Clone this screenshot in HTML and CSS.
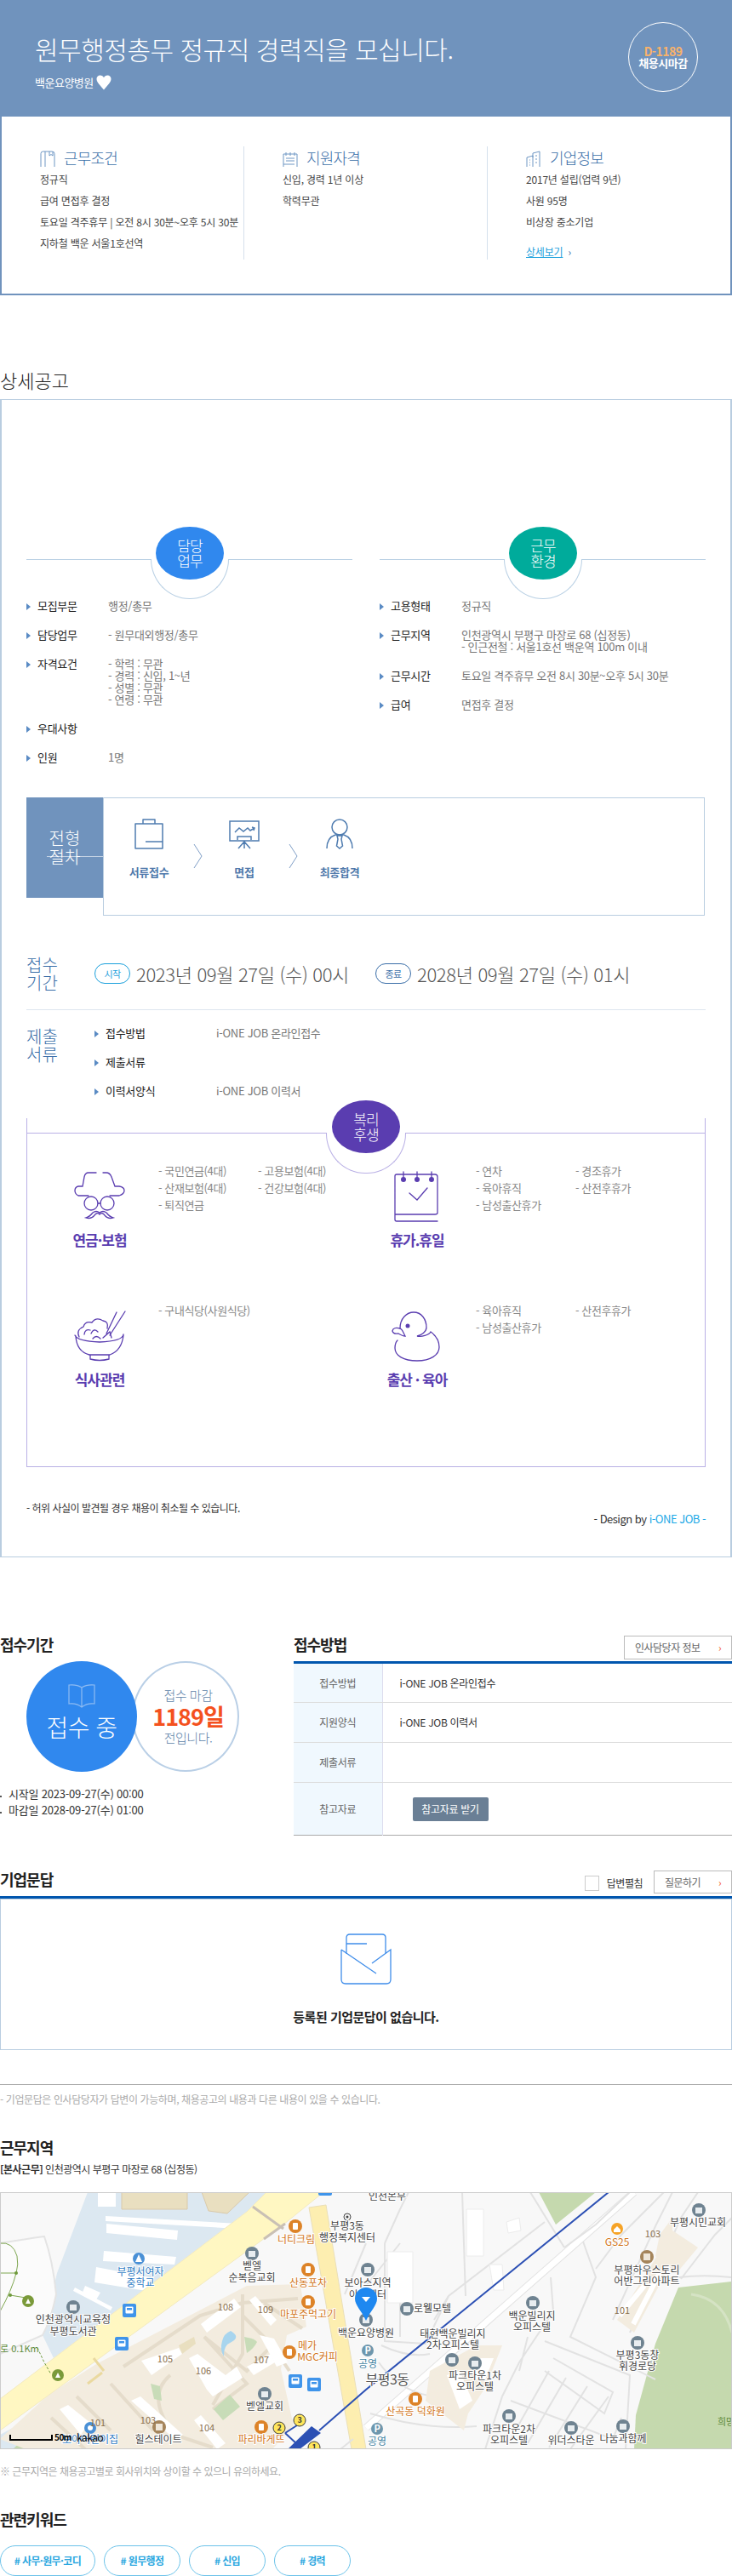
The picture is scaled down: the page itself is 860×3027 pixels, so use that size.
FILE: index.html
```html
<!DOCTYPE html>
<html lang="ko">
<head>
    <meta charset="UTF-8">
    <title>원무행정총무 정규직 경력직을 모십니다.</title>
    <link rel="stylesheet" href="styles.css">
</head>
<body>
    <!-- top summary -->
    <div class="job-head">
        <div class="job-title">
            <h1>원무행정총무 정규직 경력직을 모십니다.</h1>
            <div class="job-company">백운요양병원
                <svg class="heart" viewBox="0 0 18 18"><path d="M9 17.5C5 12.5 0.5 9 0.5 4.8 0.5 2.2 2.4 0.5 4.6 0.5 6.6 0.5 8.2 1.5 9 3.2 9.8 1.5 11.4 0.5 13.4 0.5 15.6 0.5 17.5 2.2 17.5 4.8 17.5 9 13 12.5 9 17.5Z" fill="#fff"/></svg>
            </div>
        </div>
        <div class="d-day">
            <span class="d-num">D-1189</span>
            <span class="d-txt">채용시마감</span>
        </div>
    </div>
    <div class="summary">
        <div class="sum-col first">
            <h3><svg viewBox="0 0 18 20"><path d="M1 19V3.5Q1 1 3.5 1H14Q17 1 17 3.500V19M6 19V1M11 1V6L13 4.500 15 6V1" fill="none" stroke="#6f97c4"/></svg>근무조건</h3>
            <p>정규직</p>
            <p>급여 면접후 결정</p>
            <p>토요일 격주휴무 | 오전 8시 30분~오후 5시 30분</p>
            <p>지하철 백운 서울1호선역</p>
        </div>
        <div class="sum-col">
            <h3><svg viewBox="0 0 18 20"><path d="M1 19V4H17V19M4 2V6M9 2V6M14 2V6M4 9H14M4 12H14M1 16H14" fill="none" stroke="#6f97c4"/></svg>지원자격</h3>
            <p>신입, 경력 1년 이상</p>
            <p>학력무관</p>
        </div>
        <div class="sum-col">
            <h3><svg viewBox="0 0 18 20"><path d="M1 19V8L8 6V19M8 8V3L16 1V19M4 11H5M4 14H5M4 17H5M11 6H13M11 10H13M11 14H13" fill="none" stroke="#6f97c4"/></svg>기업정보</h3>
            <p>2017년 설립(업력 9년)</p>
            <p>사원 95명</p>
            <p>비상장 중소기업</p>
            <a class="more" href="#"><u>상세보기</u><i>›</i></a>
        </div>
    </div>

    <h2 class="detail-title">상세공고</h2>

    <div class="detail">
        <div class="two-col">
            <div class="col">
                <div class="badge-head">
                    <span class="arc"></span>
                    <span class="oval blue">담당<br>업무</span>
                </div>
                <div class="row"><b>모집부문</b><span>행정/총무</span></div>
                <div class="row"><b>담당업무</b><span>- 원무대외행정/총무</span></div>
                <div class="row"><b>자격요건</b><span>- 학력 : 무관<br>- 경력 : 신입, 1~년<br>- 성별 : 무관<br>- 연령 : 무관</span></div>
                <div class="row"><b>우대사항</b><span></span></div>
                <div class="row"><b>인원</b><span>1명</span></div>
            </div>
            <div class="col">
                <div class="badge-head">
                    <span class="arc"></span>
                    <span class="oval green">근무<br>환경</span>
                </div>
                <div class="row"><b>고용형태</b><span>정규직</span></div>
                <div class="row"><b>근무지역</b><span>인천광역시 부평구 마장로 68 (십정동)<br>- 인근전철 : 서울1호선 백운역 100m 이내</span></div>
                <div class="row"><b>근무시간</b><span>토요일 격주휴무 오전 8시 30분~오후 5시 30분</span></div>
                <div class="row"><b>급여</b><span>면접후 결정</span></div>
            </div>
        </div>

        <div class="proc">
            <div class="proc-name">전형<br>절차</div>
            <div class="proc-box">
                <div class="step">
                    <svg viewBox="0 0 36 36"><path d="M2 6H34V35H2ZM11 6V1H25V6M14 27H34" fill="none" stroke="#4f7cb0" stroke-width="1.500" stroke-linejoin="round"/></svg>
                    <b>서류접수</b>
                </div>
                <svg class="chev" viewBox="0 0 11 28"><path d="M1 0L10 14 1 28" fill="none" stroke="#7f9ec6"/></svg>
                <div class="step">
                    <svg viewBox="0 0 36 36"><path d="M1 3H35V26H1ZM10 25V21H26V25M18 26V35M18 27L11 35M18 27L25 35M7 16L12 11 17 15 22 11 25 14 30 11M27 10L30 11 29 14" fill="none" stroke="#4f7cb0" stroke-width="1.500"/></svg>
                    <b>면접</b>
                </div>
                <svg class="chev" viewBox="0 0 11 28"><path d="M1 0L10 14 1 28" fill="none" stroke="#7f9ec6"/></svg>
                <div class="step">
                    <svg viewBox="0 0 36 36"><circle cx="18" cy="10" r="9" fill="none" stroke="#4f7cb0" stroke-width="1.500"/><path d="M3 35C3 26 7 21 13 19H23C29 21 33 26 33 35M15 20H21L20 24 21.500 32 18 35 14.500 32 16 24Z" fill="none" stroke="#4f7cb0" stroke-width="1.500"/></svg>
                    <b>최종합격</b>
                </div>
            </div>
        </div>

        <div class="period">
            <div class="side-title">접수<br>기간</div>
            <span class="pill start">시작</span><span class="date">2023년 09월 27일 (수) 00시</span>
            <span class="pill end">종료</span><span class="date">2028년 09월 27일 (수) 01시</span>
        </div>

        <div class="docs">
            <div class="side-title">제출<br>서류</div>
            <div class="doc-rows">
                <div class="row"><b>접수방법</b><span>i-ONE JOB 온라인접수</span></div>
                <div class="row"><b>제출서류</b><span></span></div>
                <div class="row"><b>이력서양식</b><span>i-ONE JOB 이력서</span></div>
            </div>
        </div>

        <div class="welfare">
            <span class="arc"></span>
            <span class="oval purple">복리<br>후생</span>
            <div class="wf-grid">
                <div class="wf-cell">
                    <div class="wf-icon">
                        <svg viewBox="0 0 60 58"><g fill="none" stroke="#5a3db0" stroke-width="1.300" stroke-linecap="round"><path d="M26 1H17Q13 1 12 6L10 17H5Q1 18 1 22T5 28H17M34 1H38Q42 1 44 6L48 17H53Q59 18 59 22T53 28H42"/><circle cx="20" cy="37" r="8"/><circle cx="39" cy="37" r="8"/><path d="M28 37H31"/><path d="M14 54Q20 56 24 51 27 47 30 50 33 47 36 51 40 56 46 54 42 53 38 48 34 45 30 48 26 45 22 48 18 53 14 54Z"/></g></svg>
                        <strong>연금·보험</strong>
                    </div>
                    <ul><li>- 국민연금(4대)</li><li>- 고용보험(4대)</li><li>- 산재보험(4대)</li><li>- 건강보험(4대)</li><li>- 퇴직연금</li></ul>
                </div>
                <div class="wf-cell">
                    <div class="wf-icon">
                        <svg viewBox="0 0 60 58"><g fill="none" stroke="#5a3db0" stroke-width="1.300" stroke-linecap="round"><path d="M6 3H51Q54 3 54 6V48Q54 50 51 50H4V5Q4 3 6 3ZM4 50V56Q4 58 6 58H54M21 25L30 33 42 19M14 0V10M30 0V10M47 0V10"/></g><circle cx="14" cy="9" r="3" fill="#5a3db0"/><circle cx="30" cy="9" r="3" fill="#5a3db0"/><circle cx="47" cy="9" r="3" fill="#5a3db0"/></svg>
                        <strong>휴가.휴일</strong>
                    </div>
                    <ul><li>- 연차</li><li>- 경조휴가</li><li>- 육아휴직</li><li>- 산전후휴가</li><li>- 남성출산휴가</li></ul>
                </div>
                <div class="wf-cell">
                    <div class="wf-icon">
                        <svg viewBox="0 0 60 58"><g fill="none" stroke="#5a3db0" stroke-width="1.300" stroke-linecap="round"><path d="M1 28Q4 35 30 36 57 35 58 27M2 29Q3 47 18 51H42Q56 46 58 28M19 51V56Q30 59 41 56V51M6 30Q2 22 11 18 13 11 21 13 26 6 34 11 41 12 39 20M12 27Q13 20 19 22M20 26Q23 19 28 24M22 32Q26 27 31 32M38 26L50 1M42 28L60 0M34 31L42 24 44 31"/></g></svg>
                        <strong>식사관련</strong>
                    </div>
                    <ul><li>- 구내식당(사원식당)</li></ul>
                </div>
                <div class="wf-cell">
                    <div class="wf-icon">
                        <svg viewBox="0 0 60 58"><g fill="none" stroke="#5a3db0" stroke-width="1.300" stroke-linecap="round"><path d="M10 20C10 8 18 1 26 1 35 1 41 9 41 19 41 24 35 28 30 29 35 30 44 28 46 24 53 29 56 34 56 42 56 51 46 58 30 58 14 58 4 52 4 43 4 38 6 35 7 34"/><path d="M10 20Q2 18 1 23 2 27 8 26 13 29 16 29 14 25 13 23 12 21 10 20Z"/></g><circle cx="19" cy="17" r="2.500" fill="#5a3db0"/></svg>
                        <strong>출산 · 육아</strong>
                    </div>
                    <ul><li>- 육아휴직</li><li>- 산전후휴가</li><li>- 남성출산휴가</li></ul>
                </div>
            </div>
        </div>

        <p class="warn">- 허위 사실이 발견될 경우 채용이 취소될 수 있습니다.</p>
        <p class="design">- Design by <em>i-ONE JOB -</em></p>
    </div>

    <!-- period + method -->
    <div class="apply">
        <div class="apply-left">
            <h4>접수기간</h4>
            <div class="circles">
                <div class="c-blue">
                    <svg viewBox="0 0 32 28"><path d="M16 4Q10 0 1 1V23Q10 22 16 27 22 22 31 23V1Q22 0 16 4ZM16 4V27" fill="none" stroke="#8fbcf2" stroke-width="1.200"/></svg>
                    <span>접수 중</span>
                </div>
                <div class="c-white">
                    <span>접수 마감</span>
                    <strong>1189일</strong>
                    <span>전입니다.</span>
                </div>
            </div>
            <ul class="dates">
                <li>시작일 2023-09-27(수) 00:00</li>
                <li>마감일 2028-09-27(수) 01:00</li>
            </ul>
        </div>
        <div class="apply-right">
            <div class="method-head">
                <h4>접수방법</h4>
                <a class="line-btn wide" href="#">인사담당자 정보<i>›</i></a>
            </div>
            <table class="method">
                <tr><th>접수방법</th><td>i-ONE JOB 온라인접수</td></tr>
                <tr><th>지원양식</th><td>i-ONE JOB 이력서</td></tr>
                <tr><th>제출서류</th><td></td></tr>
                <tr class="tall"><th>참고자료</th><td><a class="file-btn" href="#">참고자료 받기</a></td></tr>
            </table>
        </div>
    </div>

    <div class="qa-head">
        <h4>기업문답</h4>
        <label class="qa-check"><span class="box"></span>답변펼침</label>
        <a class="line-btn" href="#">질문하기<i>›</i></a>
    </div>
    <div class="qa-box">
        <svg viewBox="0 0 60 60"><path d="M7 24V5Q7 1 11 1H49Q53 1 53 5V24M7 12H31M1 19V54Q1 59 6 59H54Q59 59 59 54V19L37 35M1 19L42 47" fill="none" stroke="#3f8dea" stroke-width="1.300"/></svg>
        <strong>등록된 기업문답이 없습니다.</strong>
    </div>
    <p class="qa-note">- 기업문답은 인사담당자가 답변이 가능하며, 채용공고의 내용과 다른 내용이 있을 수 있습니다.</p>

    <h4 class="area-title">근무지역</h4>
    <p class="address"><b>[본사근무]</b> 인천광역시 부평구 마장로 68 (십정동)</p>

    <div class="map">
        <svg viewBox="0 0 860 302" width="860" height="302">
            <defs>
                <g id="poi"><circle r="8" fill="#6f8391"/><rect x="-4" y="-3" width="8" height="7" fill="#e8edf0"/></g>
                <g id="poi-brown"><circle r="8" fill="#a5855c"/><rect x="-4" y="-4" width="8" height="8" fill="#efe7da"/></g>
                <g id="poi-orange"><circle r="8" fill="#dd8328"/><rect x="-3" y="-4" width="6" height="8" rx="1" fill="#fff"/></g>
                <g id="bus"><rect x="-8" y="-8" width="16" height="16" rx="2" fill="#3f94ea"/><rect x="-4.500" y="-4.500" width="9" height="8" rx="1" fill="#fff"/><rect x="-3" y="-3" width="6" height="2.500" fill="#3f94ea"/></g>
            </defs>
            <rect width="860" height="302" fill="#f8f8f8"/>

            <!-- water, parks -->
            <path d="M103 0L67 95 50 168 63 195 290 23 313 0Z" fill="#dce8f1"/>
            <path d="M0 285L42 262 80 302H0Z" fill="#dce8f1"/>
            <path d="M15 302L45 275 60 302Z" fill="#c5d9ae"/>
            <path d="M633 0H700L653 38Z" fill="#c5d9ae"/>
            <path d="M860 105L797 112 770 178 747 262 745 302H860Z" fill="#c5d9ae"/>
            <path d="M812 120Q850 125 860 165" fill="none" stroke="#d5e3c4" stroke-width="3"/>

            <!-- apartment block -->
            <path d="M57 238L113 202 290 110 353 108 360 158 337 168 330 208 345 275 320 302H30L0 290Z" fill="#f3ecdf"/>
            <g fill="none" stroke="#e5dccb" stroke-width="4">
                <path d="M145 205L235 145 285 130 350 125"/>
                <path d="M285 120V190L250 250M285 145L320 180 290 210 240 170"/>
                <path d="M130 225L180 280M200 215Q170 240 205 285L250 300"/>
                <path d="M90 240L130 280M60 265L100 302M240 170L290 225 250 255"/>
                <path d="M310 130L355 160M320 180L340 210"/>
            </g>
            <path d="M271 163Q283 170 272 176 262 180 263 193 258 185 261 175 263 166 271 163Z" fill="#a8d5ee"/>
            <path d="M287 170Q300 172 302 176 298 184 290 189Z" fill="#c8dcb8"/>
            <path d="M177 225L188 228 190 245 181 243Z" fill="#c8dcb8"/>
            <path d="M251 255L270 238 282 252 262 268Z" fill="#c8dcb8"/>
            <g fill="#fff">
                <path d="M236 155L275 125 283 135 243 165Z"/>
                <path d="M293 127L300 122 325 150 318 157Z"/>
                <path d="M166 198L210 183 214 190 178 215Z"/>
                <path d="M222 195L232 190 265 215 278 205 285 218 250 240 243 232Z"/>
                <path d="M290 205L318 190 323 200 298 215Z"/>
                <path d="M154 245L165 240 215 285 205 290Z"/>
                <path d="M70 255L80 250 105 270 95 285Z"/>
                <path d="M228 268L236 262 265 295 255 302Z"/>
                <path d="M305 168L322 172 338 200 325 205Z"/>
            </g>
            <path d="M210 180L228 170 230 178 214 190Z" fill="#e9dfc0"/>

            <!-- school buildings -->
            <path d="M143 0H220V20H143Z" fill="#e9dfc0" stroke="#d9c9aa"/>
            <path d="M237 0H293L267 25 245 22Z" fill="#e9dfc0" stroke="#d9c9aa"/>
            <g fill="#fff">
                <rect x="115" y="0" width="21" height="17"/>
                <path d="M124 28L300 38 300 44 124 34Z"/>
                <path d="M125 37L209 45 208 56 125 48Z"/>
                <path d="M122 69L207 76 205 85 121 81Z"/>
                <path d="M113 88L176 100 172 116 111 106Z"/>
                <path d="M100 110L118 118 112 128 96 120Z"/>
                <path d="M88 112L132 135 130 139 86 116Z"/>
            </g>

            <!-- left park outline -->
            <path d="M0 60Q30 55 52 52 62 80 66 120 60 150 50 168L0 190" fill="#fbfbfb" stroke="#e4e4e4" stroke-width="2"/>
            <g fill="none" stroke="#7ea650" stroke-width="1">
                <path d="M0 60Q15 58 20 75 22 85 19 95 14 115 0 140"/>
                <path d="M0 95H19M12 121L30 124"/>
            </g>
            <circle cx="19" cy="95" r="2" fill="#6e9a3a"/><circle cx="12" cy="121" r="2" fill="#6e9a3a"/>

            <!-- main roads -->
            <path d="M0 243L290 23 313 0H380L333 38 0 280Z" fill="#fff7c2" stroke="#f3eac0"/>
            <path d="M363 18L383 15 430 302H413Z" fill="#fdeeb0" stroke="#eadfb8"/>
            <path d="M103 225L120 212M110 195L122 210" stroke="#ead9a0" stroke-width="3"/>
            <g stroke="#c9c0b5" stroke-width="3"><path d="M297 17L333 43M335 37L310 55"/></g>

            <!-- white roads -->
            <g fill="none" stroke="#e3e3e3" stroke-width="9"><path d="M745 0L430 277"/></g>
            <g fill="none" stroke="#fff" stroke-width="7"><path d="M745 0L430 277"/></g>
            <g fill="none" stroke="#e2e2e2" stroke-width="2">
                <path d="M623 0L663 65M640 35L527 122 510 150M663 65L700 38 740 0"/>
                <path d="M547 122L543 0M452 60L470 20 480 0M430 110L470 60"/>
                <path d="M452 60V175L500 178 527 122M470 120V170"/>
                <path d="M448 180Q480 195 505 190M435 260Q500 280 560 275"/>
                <path d="M647 100L650 140 610 200 590 240 570 302M620 170L610 210"/>
                <path d="M685 58L700 100 670 170 770 220M640 175L740 215 735 302"/>
                <path d="M650 195L720 235 710 260 640 210M600 245L720 290 730 265"/>
                <path d="M645 210L600 290M665 218L620 295M690 228L645 300M715 240L670 302"/>
                <path d="M700 90L730 50 780 0M720 150L770 40 790 0M740 165L800 30 820 0"/>
                <path d="M770 105Q810 95 860 100"/>
                <path d="M800 102L840 50 860 30"/>
                <path d="M445 200Q470 235 510 240L560 225M400 302L415 290"/>
                <path d="M430 60L405 120"/>
            </g>
            <g fill="#fff" stroke="#ececec">
                <path d="M455 70H485V130H455Z"/>
                <path d="M548 20H568V75H548Z"/>
                <path d="M595 35L610 30 612 45 597 48Z"/>
                <path d="M575 85L580 115 592 115 590 85Z"/>
            </g>

            <!-- small apartment right -->
            <path d="M775 50L790 30 790 45 820 65 795 95 770 75Z" fill="#f3ecdf"/>
            <path d="M725 150L775 70 790 80 745 165Z" fill="#f3ecdf"/>
            <g stroke="#fff" stroke-width="6"><path d="M728 145L757 110M744 155L775 95"/></g>
            <path d="M505 210L560 180 590 180 570 230 550 260 545 280 500 245Z" fill="#f3ecdf"/>
            <g fill="#fff"><path d="M525 215L540 210 555 245 540 255Z"/><path d="M560 195L580 195 570 220 555 220Z"/></g>

            <!-- subway -->
            <path d="M715 0L430 232 375 280" fill="none" stroke="#2c50b4" stroke-width="2"/>
            <path d="M366 275L377 283 352 302H338Z" fill="#2c50b4"/>
            <path d="M335 283L352 272M335 283L350 297" fill="none" stroke="#2c50b4" stroke-width="2"/>
            <g stroke="#3a3a3a" font-size="9" fill="#ffe65c">
                <circle cx="352" cy="268" r="7"/><circle cx="328" cy="277" r="7"/><circle cx="369" cy="300" r="7"/>
            </g>
            <text class="m-num" x="352" y="271">3</text>
            <text class="m-num" x="328" y="280">2</text>
            <text class="m-num" x="369" y="303">1</text>

            <!-- pois -->
            <use href="#poi" x="86" y="135"/><use href="#poi" x="296" y="72"/><use href="#poi" x="311" y="237"/>
            <use href="#poi" x="432" y="91"/><use href="#poi" x="430" y="150"/><use href="#poi" x="478" y="137"/>
            <use href="#poi" x="626" y="130"/><use href="#poi" x="531" y="197"/><use href="#poi" x="558" y="201"/>
            <use href="#poi" x="598" y="263"/><use href="#poi" x="671" y="277"/><use href="#poi" x="732" y="275"/>
            <use href="#poi" x="749" y="177"/><use href="#poi" x="821" y="21"/>
            <use href="#poi-brown" x="187" y="276"/><use href="#poi-brown" x="760" y="76"/>
            <use href="#poi-orange" x="347" y="40"/><use href="#poi-orange" x="362" y="91"/><use href="#poi-orange" x="362" y="129"/>
            <use href="#poi-orange" x="340" y="188"/><use href="#poi-orange" x="307" y="276"/><use href="#poi-orange" x="488" y="243"/>
            <circle cx="725" cy="43" r="7" fill="#f6a326"/><path d="M721 44L725 40 729 44V47H721Z" fill="#fff"/>
            <circle cx="408" cy="29" r="4" fill="none" stroke="#444"/><circle cx="408" cy="29" r="1.500" fill="#444"/>
            <circle cx="163" cy="78" r="7" fill="#4a90d6"/><path d="M159 82L163 73 167 82Z" fill="#fff"/>
            <circle cx="106" cy="277" r="7" fill="#4a90d6"/><circle cx="106" cy="277" r="3" fill="#fff"/>
            <circle cx="33" cy="128" r="7" fill="#7a9a3a"/><path d="M30 131L33 125 36 131Z" fill="#fff"/>
            <circle cx="68" cy="215" r="7" fill="#7a9a3a"/><path d="M65 218L68 212 71 218Z" fill="#fff"/>
            <circle cx="432" cy="186" r="7" fill="#6e97ad"/><circle cx="443" cy="278" r="7" fill="#6e97ad"/>
            <text class="m-p" x="432" y="190">P</text><text class="m-p" x="443" y="282">P</text>
            <use href="#bus" x="152" y="139"/><use href="#bus" x="143" y="178"/><use href="#bus" x="347" y="222"/>
            <use href="#bus" x="369" y="226"/><use href="#bus" x="382" y="-4"/>

            <!-- labels -->
            <g class="m-lb">
                <text x="86" y="154">인천광역시교육청</text><text x="86" y="168">부평도서관</text>
                <text x="296" y="91">벧엘</text><text x="296" y="105">순복음교회</text>
                <text x="408" y="44">부평3동</text><text x="408" y="58">행정복지센터</text>
                <text x="432" y="111">보아스지역</text><text x="432" y="125">아동센터</text>
                <text x="311" y="256">벧엘교회</text><text x="430" y="170">백운요양병원</text>
                <text x="508" y="141">로웰모텔</text>
                <text x="532" y="171">태현백운빌리지</text><text x="532" y="184">2차오피스텔</text>
                <text x="625" y="150">백운빌리지</text><text x="625" y="163">오피스텔</text>
                <text x="558" y="220">파크타운1차</text><text x="558" y="233">오피스텔</text>
                <text x="598" y="283">파크타운2차</text><text x="598" y="296">오피스텔</text>
                <text x="671" y="296">위더스타운</text><text x="732" y="294">나눔과함께</text>
                <text x="749" y="196">부평3동창</text><text x="749" y="209">휘경로당</text>
                <text x="760" y="96">부평하우스토리</text><text x="760" y="109">어반그린아파트</text>
                <text x="820" y="40">부평시민교회</text>
                <text x="186" y="295">힐스테이트</text>
                <text x="455" y="9">인천본부</text>
            </g>
            <g class="m-lb blue">
                <text x="165" y="98">부평서여자</text><text x="165" y="111">중학교</text>
                <text x="106" y="295">보아어린이집</text>
            </g>
            <g class="m-lb org">
                <text x="348" y="60">너티크림</text><text x="362" y="111">산동포차</text><text x="362" y="148">마포주먹고기</text>
                <text x="361" y="185">메가</text><text x="373" y="198">MGC커피</text>
                <text x="307" y="295">파리바게뜨</text><text x="488" y="262">산곡동 덕화원</text>
                <text x="725" y="63">GS25</text>
            </g>
            <g class="m-lb teal">
                <text x="432" y="206">공영</text><text x="443" y="297">공영</text>
            </g>
            <g class="m-lb apt">
                <text x="265" y="139">108</text><text x="312" y="142">109</text><text x="194" y="200">105</text><text x="239" y="214">106</text>
                <text x="307" y="201">107</text><text x="115" y="275">101</text><text x="174" y="272">103</text><text x="243" y="281">104</text>
                <text x="731" y="143">101</text><text x="767" y="53">103</text>
            </g>
            <text class="m-big" x="455" y="226">부평3동</text>
            <text class="m-park" x="0" y="188">로 0.1Km</text>
            <text class="m-park" x="853" y="274">희망</text>
            <path d="M44 183L52 200 60 214" fill="none" stroke="#6e9a3a" stroke-dasharray="3 2"/>

            <!-- marker -->
            <path d="M430 151C424 138 417 133 417 125A13 13 0 0 1 443 125C443 133 436 138 430 151Z" fill="#1e88f0"/>
            <path d="M425 123H435L430 129Z" fill="#fff"/>

            <!-- scale -->
            <path d="M12 285V291H61V285" fill="none" stroke="#000" stroke-width="2"/>
            <text class="m-scale" x="64" y="292">50m</text>
            <text class="m-kakao" x="90" y="293">kakao</text>
        </svg>
    </div>
    <p class="map-note">※ 근무지역은 채용공고별로 회사위치와 상이할 수 있으니 유의하세요.</p>

    <h4 class="kw-title">관련키워드</h4>
    <div class="keywords">
        <a class="kw w1" href="#"># 사무·원무·코디</a>
        <a class="kw" href="#"># 원무행정</a>
        <a class="kw" href="#"># 신입</a>
        <a class="kw" href="#"># 경력</a>
    </div>
</body>
</html>
```

FILE: styles.css
```css
* {
    box-sizing: border-box;
}

body {
    margin: 0;
    width: 860px;
    font-family: "Noto Sans CJK KR", "Noto Sans", sans-serif;
    font-size: 12px;
    line-height: 14px;
    color: #333;
    letter-spacing: -0.5px;
    background: #fff;
}

h1, h2, h3, h4, p, ul {
    margin: 0;
    padding: 0;
    font-weight: 400;
}

ul {
    list-style: none;
}

a {
    text-decoration: none;
    color: inherit;
}

/* header */
.job-head {
    height: 137px;
    background: #7093bd;
    padding: 26px 40px 0 41px;
    display: flex;
    justify-content: space-between;
    align-items: flex-start;
    color: #fff;
}

.job-title {
    padding-top: 11px;
}

.job-title h1 {
    font-size: 30px;
    line-height: 40px;
    font-weight: 300;
    letter-spacing: -0.5px;
}

.job-company {
    margin-top: 10px;
    line-height: 20px;
    font-size: 13px;
    display: flex;
    align-items: center;
    gap: 3px;
}

.heart {
    width: 18px;
    height: 18px;
}

.d-day {
    width: 82px;
    height: 82px;
    border: 1px solid #fff;
    border-radius: 50%;
    display: flex;
    flex-direction: column;
    align-items: center;
    justify-content: center;
    font-size: 13px;
    font-weight: 700;
}

.d-num {
    color: #f8b26a;
    font-size: 14px;
}

.summary {
    height: 210px;
    border: 2px solid #7093bd;
    border-top: 0;
    padding-top: 35px;
    display: flex;
}

.sum-col {
    width: 287px;
    height: 133px;
    padding-left: 45px;
    border-left: 1px solid #d5e0ec;
    color: #444;
    letter-spacing: -0.2px;
}

.sum-col.first {
    width: 285px;
    border-left: 0;
}

.sum-col h3 {
    height: 26px;
    font-size: 18px;
    line-height: 22px;
    font-weight: 300;
    color: #3a6ea8;
    display: flex;
    gap: 10px;
    align-items: center;
    letter-spacing: -0.8px;
}

.sum-col h3 svg {
    width: 18px;
    height: 20px;
    flex: none;
    margin-top: 4px;
}

.sum-col p {
    line-height: 25px;
    white-space: nowrap;
}

.more {
    display: block;
    margin-top: 16px;
    color: #1aa0dc;
}

.more i {
    font-style: normal;
    margin-left: 6px;
    color: #3a6ea8;
}

.detail-title {
    margin-top: 85px;
    font-size: 22px;
    line-height: 28px;
    font-weight: 300;
    color: #222;
    letter-spacing: 0;
}

/* detail box */
.detail {
    margin-top: 9px;
    height: 1361px;
    border: 1px solid #b9cde0;
    border-width: 1px 2px 1px 2px;
    padding: 149px 29px 0 29px;
}

.two-col {
    display: flex;
    gap: 32px;
}

.col {
    width: 383px;
}

.badge-head {
    position: relative;
    height: 86px;
}

.badge-head::before {
    content: "";
    position: absolute;
    left: 0;
    right: 0;
    top: 38px;
    border-top: 1px solid #b9d0e4;
}

.oval {
    position: absolute;
    left: 152px;
    top: 0;
    width: 80px;
    height: 62px;
    border-radius: 50%;
    color: #fff;
    font-size: 17px;
    line-height: 18px;
    font-weight: 300;
    letter-spacing: -1px;
    text-align: center;
    display: flex;
    align-items: center;
    justify-content: center;
}

.oval.blue {
    background: #3088ee;
}

.oval.green {
    background: #00ab9b;
}

.oval.purple {
    background: #5a3db0;
    left: 358px;
    top: -21px;
}

.arc {
    position: absolute;
    left: 146px;
    top: 38px;
    width: 92px;
    height: 47px;
    background: #fff;
    border: 1px solid #b9d0e4;
    border-top: 0;
    border-radius: 0 0 46px 46px / 0 0 47px 47px;
}

.row {
    display: flex;
    margin-bottom: 20px;
    position: relative;
    padding-left: 13px;
    font-size: 13px;
    letter-spacing: -0.3px;
}

.row::before {
    content: "";
    position: absolute;
    left: 0;
    top: 4px;
    border-left: 5px solid #5a8bc4;
    border-top: 4px solid transparent;
    border-bottom: 4px solid transparent;
}

.row b {
    width: 83px;
    flex: none;
    font-weight: 400;
    color: #222;
}

.row span {
    color: #777;
    white-space: nowrap;
}

/* hiring steps */
.proc {
    margin-top: 20px;
    display: flex;
    align-items: flex-start;
}

.proc-name {
    width: 90px;
    height: 118px;
    background: #7093bd;
    color: #fff;
    font-size: 20px;
    line-height: 22px;
    font-weight: 300;
    letter-spacing: 0;
    text-align: center;
    padding-top: 37px;
    position: relative;
}

.proc-name::after {
    content: "";
    position: absolute;
    left: 24px;
    right: 0;
    top: 69px;
    border-top: 1px solid rgba(255, 255, 255, 0.6);
}

.proc-box {
    width: 707px;
    height: 139px;
    border: 1px solid #b9cde0;
    display: flex;
    align-items: flex-start;
}

.step {
    width: 106px;
    padding-top: 24px;
    display: flex;
    flex-direction: column;
    align-items: center;
}

.step svg {
    width: 36px;
    height: 36px;
}

.step b {
    margin-top: 20px;
    color: #4f79ab;
    font-size: 13px;
    letter-spacing: -0.3px;
    font-weight: 700;
}

.chev {
    width: 11px;
    height: 28px;
    flex: none;
    margin: 54px -4px 0 -1px;
}

/* period */
.period {
    margin-top: 47px;
    padding-bottom: 21px;
    border-bottom: 1px solid #dde6ef;
    display: flex;
    align-items: center;
}

.side-title {
    width: 80px;
    flex: none;
    font-size: 20px;
    line-height: 21px;
    font-weight: 300;
    color: #3a6ea8;
    letter-spacing: 0;
}

.pill {
    width: 42px;
    height: 24px;
    border: 1px solid #1aa0dc;
    border-radius: 12px;
    color: #1aa0dc;
    font-size: 11px;
    line-height: 22px;
    text-align: center;
    flex: none;
}

.pill.end {
    margin-left: 31px;
    border-color: #3a6ea8;
    color: #3a6ea8;
}

.date {
    margin-left: 7px;
    font-size: 22px;
    font-weight: 300;
    color: #555;
    letter-spacing: -0.35px;
    white-space: nowrap;
}

.docs {
    margin-top: 20px;
    display: flex;
    align-items: flex-start;
}

.doc-rows .row b {
    width: 130px;
}

.doc-rows .row:last-child {
    margin-bottom: 0;
}

/* welfare */
.welfare {
    position: relative;
    margin-top: 25px;
    height: 410px;
    border: 1px solid #b9b0e5;
    border-top: 0;
}

.welfare::before {
    content: "";
    position: absolute;
    left: 0;
    right: 0;
    top: 17px;
    border-top: 1px solid #b9b0e5;
}

.welfare .arc {
    left: 351px;
    top: 17px;
    width: 94px;
    height: 48px;
    border-color: #b9b0e5;
}

.wf-grid {
    position: relative;
    padding-top: 52px;
    display: grid;
    grid-template-columns: 373px 1fr;
    grid-auto-rows: 164px;
}

.wf-cell {
    padding-left: 20px;
    display: flex;
}

.wf-icon {
    width: 130px;
    padding-top: 11px;
    display: flex;
    flex-direction: column;
    align-items: center;
    flex: none;
}

.wf-icon svg {
    width: 60px;
    height: 58px;
    overflow: visible;
}

.wf-icon strong {
    margin-top: 12px;
    font-size: 17px;
    line-height: 20px;
    color: #5a3db0;
    white-space: nowrap;
    letter-spacing: -1px;
}

.wf-cell ul {
    margin-left: 4px;
    display: grid;
    grid-template-columns: 117px 117px;
    grid-auto-rows: 20px;
    line-height: 20px;
    font-size: 13px;
    letter-spacing: -0.4px;
    color: #888;
}

.warn {
    margin-top: 41px;
    line-height: 13px;
    color: #333;
}

.design {
    text-align: right;
    color: #333;
    font-size: 13px;
}

.design em {
    font-style: normal;
    color: #1aa8e6;
}

/* apply */
.apply {
    margin-top: 90px;
    display: flex;
}

.apply-left {
    width: 345px;
    flex: none;
}

.apply-right {
    width: 515px;
}

h4 {
    font-size: 18px;
    line-height: 24px;
    color: #222;
    letter-spacing: -1px;
}

h1, h2, h3, p, ul {
    font-weight: 400;
}

.apply h4, .qa-head h4, .area-title, .kw-title {
    font-weight: 700;
}

.circles {
    margin-top: 8px;
    padding-left: 31px;
    display: flex;
}

.c-blue {
    position: relative;
    width: 130px;
    height: 130px;
    border-radius: 50%;
    background: #3088ee;
    color: #fff;
    padding-top: 27px;
    display: flex;
    flex-direction: column;
    align-items: center;
}

.c-blue svg {
    width: 32px;
    height: 28px;
}

.c-blue span {
    margin-top: 3px;
    font-size: 28px;
    line-height: 38px;
    font-weight: 300;
}

.c-white {
    width: 126px;
    height: 130px;
    margin-left: -6px;
    border: 2px solid #b9cfe6;
    border-radius: 50%;
    padding-left: 6px;
    color: #5c7fa8;
    font-size: 15px;
    display: flex;
    flex-direction: column;
    align-items: center;
    justify-content: center;
    line-height: 20px;
    font-weight: 300;
}

.c-white strong {
    font-size: 27px;
    line-height: 30px;
    font-weight: 700;
    color: #f4511e;
    letter-spacing: -1px;
}

.dates {
    margin-top: 16px;
    line-height: 19px;
    font-size: 13px;
    letter-spacing: -0.2px;
}

.dates li {
    position: relative;
    padding-left: 10px;
    color: #333;
}

.dates li::before {
    content: "";
    position: absolute;
    left: 0;
    top: 12px;
    width: 2px;
    height: 2px;
    background: #555;
}

.method-head {
    height: 32px;
    display: flex;
    justify-content: space-between;
    align-items: flex-start;
}

.line-btn {
    width: 92px;
    height: 27px;
    margin-top: 2px;
    border: 1px solid #bbb;
    padding: 0 12px;
    line-height: 25px;
    color: #666;
    display: flex;
    justify-content: space-between;
}

.line-btn.wide {
    width: 127px;
    height: 28px;
}

.line-btn i {
    font-style: normal;
    color: #f4652e;
}

.method {
    width: 100%;
    border-collapse: collapse;
    border-top: 3px solid #0056ae;
    border-bottom: 1px solid #aaa;
    letter-spacing: -0.3px;
}

.method th {
    width: 104px;
    height: 47px;
    background: #f0f8fe;
    border-right: 1px solid #dde;
    border-bottom: 1px solid #ddd;
    font-weight: 400;
    color: #666;
}

.method td {
    padding-left: 20px;
    border-bottom: 1px solid #ddd;
    color: #333;
}

.method .tall th,
.method .tall td {
    height: 62px;
    border-bottom: 0;
}

.file-btn {
    display: block;
    width: 89px;
    height: 28px;
    margin-left: 15px;
    border-radius: 2px;
    background: #6a7f95;
    color: #fff;
    line-height: 28px;
    text-align: center;
}

/* qa */
.qa-head {
    margin-top: 39px;
    height: 35px;
    border-bottom: 3px solid #0056ae;
    display: flex;
    align-items: flex-start;
}

.qa-head h4 {
    flex: 1;
}

.qa-check {
    margin: 8px 13px 0 0;
    display: flex;
    gap: 9px;
    align-items: center;
    line-height: 18px;
}

.qa-check .box {
    width: 17px;
    height: 18px;
    border: 1px solid #ccc;
}

.qa-box {
    height: 178px;
    border: 1px solid #b9cde0;
    padding-top: 40px;
    display: flex;
    flex-direction: column;
    align-items: center;
}

.qa-box svg {
    width: 60px;
    height: 60px;
}

.qa-box strong {
    margin-top: 28px;
    font-size: 15px;
    line-height: 20px;
    color: #222;
}

.qa-note {
    margin-top: 40px;
    border-top: 1px solid #aaa;
    padding-top: 10px;
    color: #aaa;
    letter-spacing: -0.4px;
}

.area-title {
    margin-top: 37px;
}

.address {
    margin-top: 7px;
}

.address b {
    font-weight: 700;
}

.map {
    margin-top: 20px;
    height: 302px;
    border: 1px solid #ccc;
    overflow: hidden;
}

.map svg {
    display: block;
    margin: -1px;
}

.m-lb text {
    font-size: 12px;
    text-anchor: middle;
    fill: #444;
    paint-order: stroke;
    stroke: #fff;
    stroke-width: 2px;
    letter-spacing: 0;
}

.m-lb.blue text {
    fill: #2f7cc4;
}

.m-lb.org text {
    fill: #d2761a;
}

.m-lb.teal text {
    fill: #3f7f9f;
}

.m-lb.apt text {
    fill: #8a6f4e;
    font-size: 11px;
    stroke: none;
}

.m-big {
    font-size: 16px;
    text-anchor: middle;
    fill: #555;
    paint-order: stroke;
    stroke: #fff;
    stroke-width: 2px;
}

.m-num {
    font-size: 9px;
    font-weight: 700;
    text-anchor: middle;
    fill: #333;
}

.m-p {
    font-size: 11px;
    font-weight: 700;
    text-anchor: middle;
    fill: #fff;
}

.m-park {
    font-size: 11px;
    fill: #5d8a3a;
    letter-spacing: 0;
}

.m-park + .m-park {
    text-anchor: middle;
}

.m-scale {
    font-size: 10px;
    font-weight: 700;
    fill: #000;
}

.m-kakao {
    font-size: 12px;
    fill: #000;
}

.map-note {
    margin-top: 19px;
    color: #aaa;
}

.kw-title {
    margin-top: 37px;
}

.keywords {
    margin-top: 19px;
    display: flex;
    gap: 10px;
}

.kw {
    width: 90px;
    height: 36px;
    border: 1px solid #6cc3ea;
    border-radius: 18px;
    color: #2ba7e0;
    line-height: 34px;
    text-align: center;
    font-weight: 700;
    letter-spacing: -0.6px;
}

.kw.w1 {
    width: 112px;
}
```
